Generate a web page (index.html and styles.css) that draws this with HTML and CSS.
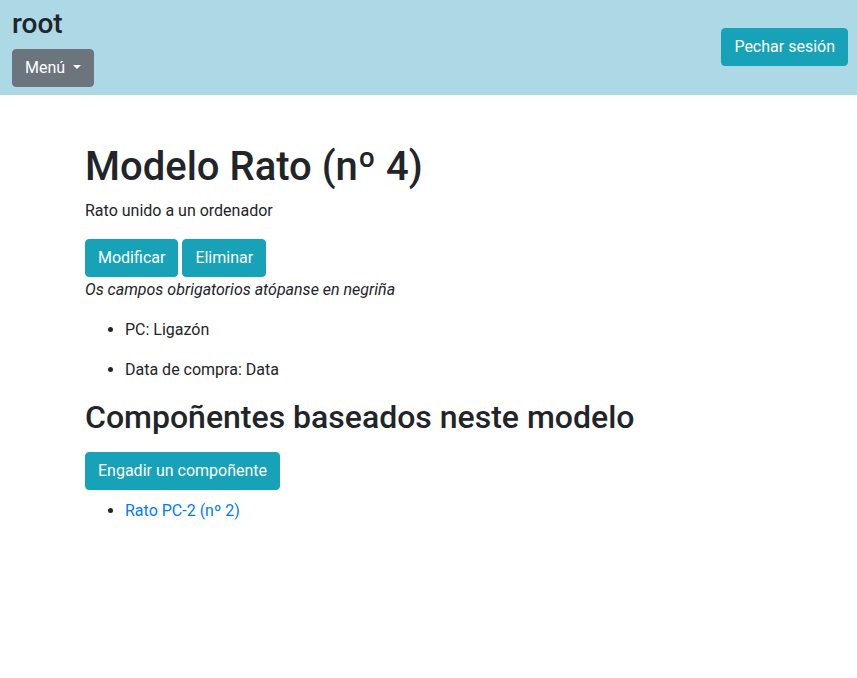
FILE: index.html
```html
<!DOCTYPE html>
<html lang="gl">
<head>
<meta charset="utf-8">
<title>Modelo Rato</title>
<link rel="stylesheet" href="styles.css">
</head>
<body>
<header class="topbar">
  <div class="brand-block">
    <h3 class="brand">root</h3>
    <button class="btn btn-secondary dropdown-toggle" type="button">Menú</button>
  </div>
  <button class="btn btn-info" type="button">Pechar sesión</button>
</header>
<main class="container">
  <h1 class="title">Modelo Rato (nº 4)</h1>
  <p class="desc">Rato unido a un ordenador</p>
  <div class="actions">
    <a class="btn btn-info" href="#">Modificar</a>
    <a class="btn btn-info" href="#">Eliminar</a>
  </div>
  <p class="note"><em>Os campos obrigatorios atópanse en negriña</em></p>
  <ul class="fields">
    <li>PC: Ligazón</li>
    <li>Data de compra: Data</li>
  </ul>
  <h2 class="subtitle">Compoñentes baseados neste modelo</h2>
  <div class="add">
    <a class="btn btn-info" href="#">Engadir un compoñente</a>
  </div>
  <ul class="components">
    <li><a class="link" href="#">Rato PC-2 (nº 2)</a></li>
  </ul>
</main>
</body>
</html>
```

FILE: styles.css
```css
* { box-sizing: border-box; }
html, body {
  margin: 0;
  padding: 0;
  background: #fff;
  color: #212529;
  font-family: Roboto, "Liberation Sans", sans-serif;
  font-size: 16px;
  line-height: 1.5;
}
.topbar {
  background: #add8e6;
  display: flex;
  align-items: center;
  justify-content: space-between;
  padding: 7px 9px 8px 12px;
  height: 95px;
}
.brand-block {
  display: flex;
  flex-direction: column;
  align-items: flex-start;
}
.brand {
  margin: 0 0 8px;
  font-size: 28px;
  font-weight: 500;
  line-height: 1.2;
}
.btn {
  display: inline-block;
  font-family: inherit;
  font-size: 16px;
  font-weight: 400;
  line-height: 24px;
  padding: 6px 12px;
  border: 1px solid transparent;
  border-radius: 4px;
  color: #fff;
  text-decoration: none;
  cursor: pointer;
}
.btn-secondary {
  background: #6c757d;
  border-color: #6c757d;
}
.btn-info {
  background: #17a2b8;
  border-color: #17a2b8;
}
.dropdown-toggle::after {
  content: "";
  display: inline-block;
  margin-left: 8px;
  vertical-align: 0.255em;
  border-top: 0.3em solid;
  border-right: 0.3em solid transparent;
  border-left: 0.3em solid transparent;
  border-bottom: 0;
}
.container {
  max-width: 687px;
  margin: 0 auto;
  padding-top: 48px;
}
.title {
  margin: 0 0 8px;
  font-size: 40px;
  font-weight: 500;
  line-height: 1.2;
}
.desc {
  margin: 0 0 16px;
}
.actions {
  display: flex;
  gap: 4px;
}
.note {
  margin: 1px 0 16px;
}
.fields {
  margin: 0;
  padding-left: 40px;
}
.fields li {
  margin-bottom: 16px;
}
.subtitle {
  margin: 0 0 16px;
  font-size: 32px;
  font-weight: 500;
  line-height: 1.2;
}
.add {
  margin-bottom: 9px;
}
.components {
  margin: 0;
  padding-left: 40px;
}
.link {
  color: #007bff;
  text-decoration: none;
}
```
